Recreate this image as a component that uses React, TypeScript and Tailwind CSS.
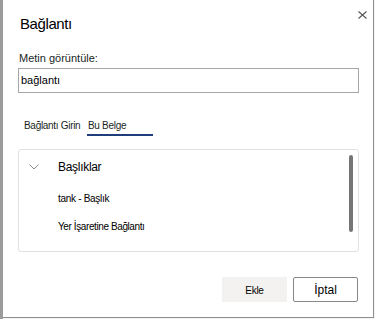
import React from "react";

export default function App() {
  const font = { fontFamily: '"Liberation Sans", Arial, sans-serif' };
  return (
    <div className="w-[375px] h-[319px] flex bg-[#f4f4f4] overflow-hidden" style={font}>
      <div className="w-[3px] h-full bg-[#9b9b9b] shrink-0" />
      <div className="relative w-[371px] h-[318px] bg-white border-r border-b border-[#8e8e8e] shrink-0 flex flex-col pl-[15px] pr-[14px] text-[#201f1e]">
        <button className="absolute top-[10px] right-[6px] w-[10px] h-[10px] flex items-center justify-center">
          <svg width="9" height="8" viewBox="0 0 9 8">
            <path d="M0.5 0.5 L8.5 7.5 M8.5 0.5 L0.5 7.5" stroke="#555" strokeWidth="1.1" fill="none" />
          </svg>
        </button>
        <div className="mt-[14px] pl-[2px] text-[15px] leading-[20px] tracking-[-0.4px] text-black">Bağlantı</div>
        <div className="mt-[17px] pl-[1px] text-[11px] leading-[14px]">Metin görüntüle:</div>
        <div className="mt-[3px] h-[25px] w-[341px] border border-[#a6a6a6] flex items-center pl-[2px] text-[11px] text-black">
          bağlantı
        </div>
        <div className="mt-[26px] flex items-start text-[10px] leading-[14px] tracking-[-0.3px]">
          <div className="ml-[6px] w-[63px]">Bağlantı Girin</div>
          <div className="flex flex-col w-[66px]">
            <span className="pl-[1px]">Bu Belge</span>
            <div className="mt-[1px] h-[2px] bg-[#1f3d7a]" />
          </div>
        </div>
        <div className="relative mt-[13px] w-[341px] h-[103px] border border-[#e1e1e1] rounded-[3px] overflow-hidden">
          <div className="h-[34px] flex items-center">
            <svg className="ml-[10px]" width="10" height="6" viewBox="0 0 10 6">
              <path d="M0.5 0.5 L5 5 L9.5 0.5" stroke="#8a8a8a" strokeWidth="1" fill="none" />
            </svg>
            <span className="ml-[19px] text-[12px] tracking-[-0.3px] text-black">Başlıklar</span>
          </div>
          <div className="h-[28px] flex items-center pl-[39px] text-[10px] tracking-[-0.3px] text-black">tank - Başlık</div>
          <div className="h-[28px] flex items-center pl-[39px] text-[10px] tracking-[-0.4px] text-black">Yer İşaretine Bağlantı</div>
          <div className="h-[36px] flex items-center">
            <svg className="ml-[12px]" width="6" height="10" viewBox="0 0 6 10">
              <path d="M0.5 0.5 L5 5 L0.5 9.5" stroke="#8a8a8a" strokeWidth="1" fill="none" />
            </svg>
            <span className="ml-[21px] text-[12px] tracking-[-0.3px] text-black">Yer İşaretleri</span>
          </div>
          <div className="absolute top-[5px] right-[5px] w-[4px] h-[77px] rounded-full bg-[#767676]" />
        </div>
        <div className="mt-[25px] flex justify-end gap-[6px] pr-[1px]">
          <button className="w-[65px] h-[25px] bg-[#f3f2f1] text-[10px] tracking-[-0.3px] text-black flex items-center justify-center pt-[2px]">Ekle</button>
          <button className="w-[65px] h-[25px] bg-white border border-[#8a8886] rounded-[2px] text-[12px] text-black flex items-center justify-center">İptal</button>
        </div>
      </div>
    </div>
  );
}
